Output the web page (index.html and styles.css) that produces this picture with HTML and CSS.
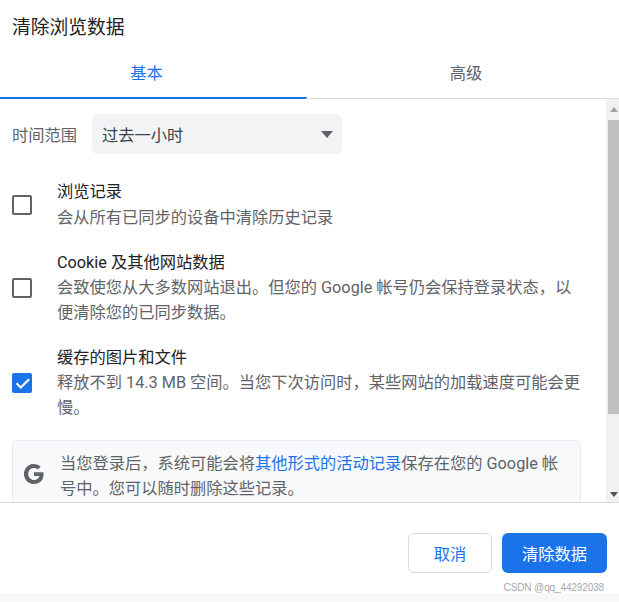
FILE: index.html
```html
<!DOCTYPE html>
<html lang="zh-CN">
<head>
<meta charset="utf-8">
<title>清除浏览数据</title>
<link rel="stylesheet" href="styles.css">
</head>
<body>
<div class="dialog">
  <h1 class="title">清除浏览数据</h1>
  <div class="tabs">
    <div class="tab tab-active">基本</div>
    <div class="tab tab-other">高级</div>
  </div>
  <div class="body">
    <div class="content">
      <div class="range">
        <span class="range-label">时间范围</span>
        <div class="select"><span>过去一小时</span><span class="caret"></span></div>
      </div>
      <div class="item item-first">
        <span class="box"></span>
        <div class="text"><div class="name">浏览记录</div><div class="desc">会从所有已同步的设备中清除历史记录</div></div>
      </div>
      <div class="item item-cookie">
        <span class="box"></span>
        <div class="text"><div class="name">Cookie 及其他网站数据</div><div class="desc">会致使您从大多数网站退出。但您的 Google 帐号仍会保持登录状态，以便清除您的已同步数据。</div></div>
      </div>
      <div class="item">
        <span class="box box-on"><svg width="20" height="20" viewBox="0 0 20 20"><path d="M4.500 10.300l4.300 4.200 8.300-8.200" fill="none" stroke="#fff" stroke-width="2.200"/></svg></span>
        <div class="text"><div class="name">缓存的图片和文件</div><div class="desc">释放不到 14.3 MB 空间。当您下次访问时，某些网站的加载速度可能会更慢。</div></div>
      </div>
      <div class="note">
        <svg class="g" width="20" height="20" viewBox="0 0 20 20"><path d="M19.6 10.2c0-.7-.1-1.4-.2-2H10v3.8h5.4a4.6 4.6 0 0 1-2 3 5.8 5.8 0 0 1-8.9-3.1 5.8 5.8 0 0 1 0-3.8A5.8 5.8 0 0 1 10 4c1.500 0 2.800.5 3.800 1.500l2.900-2.900A9.700 9.700 0 0 0 10 0 10 10 0 0 0 1 5.500a10 10 0 0 0 0 9A10 10 0 0 0 10 20c2.700 0 5-.9 6.600-2.400 1.900-1.800 3-4.400 3-7.400z" fill="#5f6368"/></svg>
        <div class="note-text">当您登录后，系统可能会将<span class="link">其他形式的活动记录</span>保存在您的 Google 帐号中。您可以随时删除这些记录。</div>
      </div>
    </div>
    <div class="scrollbar">
      <span class="arrow arrow-up"></span>
      <span class="thumb"></span>
      <span class="arrow arrow-down"></span>
    </div>
  </div>
  <div class="footer">
    <button class="btn btn-cancel">取消</button>
    <button class="btn btn-primary">清除数据</button>
  </div>
</div>
<div class="strip"></div>
<div class="watermark">CSDN @qq_44292038</div>
</body>
</html>
```
FILE: styles.css
```css
* { box-sizing: border-box; }
html, body { margin: 0; height: 602px; overflow: hidden; background: #fff; }
body {
  position: relative;
  font-family: Roboto, "Noto Sans CJK SC", sans-serif;
  color: #202124;
  font-size: 16.25px;
}
.dialog { height: 593px; display: flex; flex-direction: column; }
.title {
  margin: 0;
  height: 50px;
  padding: 15px 0 0 12px;
  font-size: 18.75px;
  line-height: 26px;
  font-weight: 400;
  color: #202124;
}
.tabs { display: flex; height: 49px; border-bottom: 1px solid #dadce0; }
.tab {
  padding-top: 13px;
  text-align: center;
  line-height: 22px;
  color: #5f6368;
}
.tab-other { flex: 1; padding-left: 6px; }
.tab-active {
  flex: 0 0 307px;
  padding-right: 14px;
  color: #1a73e8;
  border-bottom: 2px solid #1a73e8;
  height: 49px;
  border-radius: 0 0 2px 0;
}
.body { display: flex; height: 404px; border-bottom: 1px solid #dadce0; }
.content { flex: 1; overflow: hidden; padding: 15px 25px 0 12px; min-width: 0; }
.range { display: flex; align-items: center; height: 40px; }
.range-label { width: 80px; color: #5f6368; }
.select {
  width: 250px;
  height: 40px;
  background: #f1f3f4;
  border-radius: 6px;
  display: flex;
  align-items: center;
  justify-content: space-between;
  padding: 0 9px 0 10px;
  color: #3c4043;
}
.caret {
  width: 0;
  height: 0;
  border-left: 6.500px solid transparent;
  border-right: 6.500px solid transparent;
  border-top: 7px solid #5f6368;
}
.item { display: flex; align-items: center; margin-top: 20px; gap: 25px; }
.item-first { margin-top: 25px; }
.item-first .desc { padding-top: 1px; }
.item-first .box { margin-top: 1px; }
.item-cookie { margin-top: 20px; }
.box {
  flex: none;
  width: 20px;
  height: 20px;
  border: 2px solid #5f6368;
  border-radius: 2px;
  display: block;
}
.box-on { background: #1a73e8; border: 0; }
.box svg { display: block; }
.text { flex: 1; min-width: 0; }
.name { line-height: 25px; color: #202124; }
.desc { line-height: 25px; color: #5f6368; }
.note {
  margin-top: 20px;
  height: 80px;
  background: #f8f9fa;
  border: 1px solid #e8eaed;
  border-radius: 6px;
  display: flex;
  align-items: flex-start;
  padding: 10px 12px 0 11px;
  gap: 16px;
}
.g { flex: none; margin-top: 13px; }
.note-text { line-height: 25px; color: #5f6368; }
.link { color: #1a73e8; }
.scrollbar {
  flex: none;
  width: 13px;
  background: #f1f1f1;
  display: flex;
  flex-direction: column;
  align-items: center;
}
.arrow { width: 0; height: 0; border-left: 4px solid transparent; border-right: 4px solid transparent; }
.arrow-up { border-bottom: 5px solid #a3a3a3; margin: 8px 0 8px 2px; }
.arrow-down { border-top: 5px solid #505050; margin: auto 0 5px 2px; }
.thumb { width: 11px; margin-left: 2px; height: 294px; background: #c1c1c1; }
.footer { flex: 1; display: flex; justify-content: flex-end; align-items: flex-start; gap: 10px; padding: 30px 12px 0 0; }
.btn { height: 40px; border-radius: 6px; font: inherit; }
.btn-cancel { width: 84px; background: #fff; border: 1px solid #dadce0; color: #1a73e8; }
.btn-primary { width: 105px; background: #1a73e8; border: 0; color: #fff; }
.strip { height: 9px; background: #f8f8f8; }
.watermark {
  position: absolute;
  right: 15px;
  top: 581px;
  font-size: 10px;
  letter-spacing: -0.12px;
  line-height: 14px;
  color: #a8a8a8;
  font-family: "Liberation Sans", sans-serif;
}
```
